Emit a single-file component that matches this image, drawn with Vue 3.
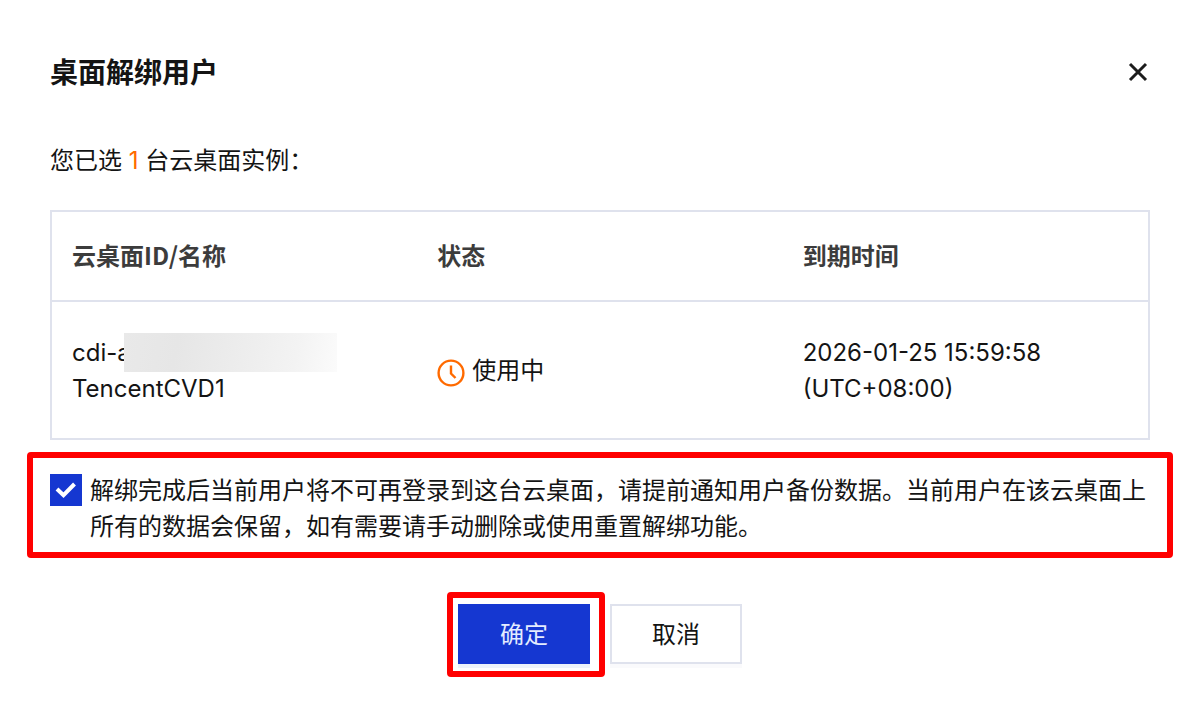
<script setup>
import { ref } from 'vue'

const agreed = ref(true)
const instances = [
  {
    id: 'cdi-a',
    name: 'TencentCVD1',
    status: '使用中',
    expires: '2026-01-25 15:59:58',
    zone: '(UTC+08:00)',
  },
]
</script>

<template>
  <main class="dialog" role="dialog" aria-labelledby="dialog-title">
    <header class="head">
      <h1 id="dialog-title">桌面解绑用户</h1>
      <button class="close" type="button" aria-label="关闭">
        <svg viewBox="0 0 20 20" width="20" height="20" aria-hidden="true">
          <path d="M2 2L18 18M18 2L2 18" fill="none" stroke="#1c1c1c" stroke-width="3" />
        </svg>
      </button>
    </header>

    <p class="intro">您已选 <span class="count">{{ instances.length }}</span> 台云桌面实例：</p>

    <table class="list">
      <thead>
        <tr>
          <th scope="col">云桌面ID/名称</th>
          <th scope="col">状态</th>
          <th scope="col">到期时间</th>
        </tr>
      </thead>
      <tbody>
        <tr v-for="item in instances" :key="item.name">
          <td>
            <div class="ident">{{ item.id }}<span class="mask"></span></div>
            <div>{{ item.name }}</div>
          </td>
          <td>
            <div class="status">
              <svg viewBox="0 0 28 28" width="28" height="28" aria-hidden="true">
                <circle cx="14" cy="14" r="12.4" fill="none" stroke="#ff6a00" stroke-width="2.4" />
                <path d="M14 6.5V14.5L18.5 19" fill="none" stroke="#ff6a00" stroke-width="2.4" />
              </svg>
              <span>{{ item.status }}</span>
            </div>
          </td>
          <td>
            <div>{{ item.expires }}</div>
            <div>{{ item.zone }}</div>
          </td>
        </tr>
      </tbody>
    </table>

    <div class="confirm marked">
      <span class="box">
        <input id="agree" v-model="agreed" type="checkbox" />
        <svg v-if="agreed" class="tick" viewBox="0 0 32 32" width="32" height="32" aria-hidden="true">
          <path d="M7 15L13.5 21.2L24.5 10" fill="none" stroke="#fff" stroke-width="4" />
        </svg>
      </span>
      <label for="agree">解绑完成后当前用户将不可再登录到这台云桌面，请提前通知用户备份数据。当前用户在该云桌面上所有的数据会保留，如有需要请手动删除或使用重置解绑功能。</label>
    </div>

    <footer class="actions">
      <div class="marked-button marked">
        <button class="btn primary" type="button">确定</button>
      </div>
      <button class="btn" type="button">取消</button>
    </footer>
  </main>
</template>

<style>
body {
  background: #fff;
}
</style>

<style scoped>
.dialog {
  box-sizing: border-box;
  padding: 49px 50px 48px;
  font-family: Inter, "Noto Sans CJK SC", sans-serif;
  font-size: 24px;
  line-height: 36px;
  color: #141414;
}

.head {
  display: flex;
  align-items: center;
  justify-content: space-between;
  height: 48px;
}

h1 {
  margin: 0;
  font-size: 28px;
  line-height: 48px;
  font-weight: 700;
}

.close {
  display: flex;
  padding: 2px 2px 4px;
  border: 0;
  background: none;
}

.intro {
  margin: 46px 0 31px;
}

.count {
  color: #ff6a00;
}

.list {
  width: 100%;
  table-layout: fixed;
  border: 2px solid #dfe2ed;
  border-collapse: separate;
  border-spacing: 0;
}

th,
td {
  text-align: left;
  vertical-align: middle;
}

th {
  padding: 25px 20px 27px;
  border-bottom: 2px solid #dfe2ed;
  font-family: "Noto Sans CJK SC", sans-serif;
  font-weight: 700;
  color: #3c3c3c;
}

td {
  padding: 33px 20px 31px;
}

.ident {
  position: relative;
}

.mask {
  position: absolute;
  top: -2px;
  left: 52px;
  width: 213px;
  height: 39px;
  background: linear-gradient(100deg, #e9e9e9, #e6e6e6 25%, #eeeeee 60%, #f3f3f3 80%, #fbfbfb);
}

.status {
  display: flex;
  align-items: center;
  gap: 7px;
}

.status svg {
  margin-top: 4px;
}

.confirm {
  display: flex;
  gap: 8px;
  margin-top: 33px;
}

.confirm label {
  flex: 1;
}

.box {
  position: relative;
  flex: none;
  width: 32px;
  height: 32px;
  margin-top: 1px;
}

.box input {
  appearance: none;
  display: block;
  width: 32px;
  height: 32px;
  margin: 0;
  border: 2px solid #dfe2ed;
}

.box input:checked {
  border-color: #1537d1;
  background: #1537d1;
}

.tick {
  position: absolute;
  inset: 0;
  pointer-events: none;
}

.marked {
  position: relative;
}

.marked::after {
  content: "";
  position: absolute;
  inset: -21px -23px -13px;
  border: 6px solid #f00;
  border-radius: 4px;
  pointer-events: none;
}

.marked-button::after {
  inset: -12px -15px -13px -11px;
}

.actions {
  display: flex;
  justify-content: center;
  gap: 20px;
  margin-top: 59px;
}

.btn {
  display: block;
  box-sizing: border-box;
  width: 132px;
  height: 60px;
  padding: 2px 0 0;
  border: 2px solid #dfe2ed;
  background: #fff;
  box-shadow: 0 4px 0 #fafafc;
  font: inherit;
  color: #141414;
}

.primary {
  border-color: #1537d1;
  background: #1537d1;
  box-shadow: 0 4px 0 #edf3fb;
  color: #e4ecff;
}
</style>
